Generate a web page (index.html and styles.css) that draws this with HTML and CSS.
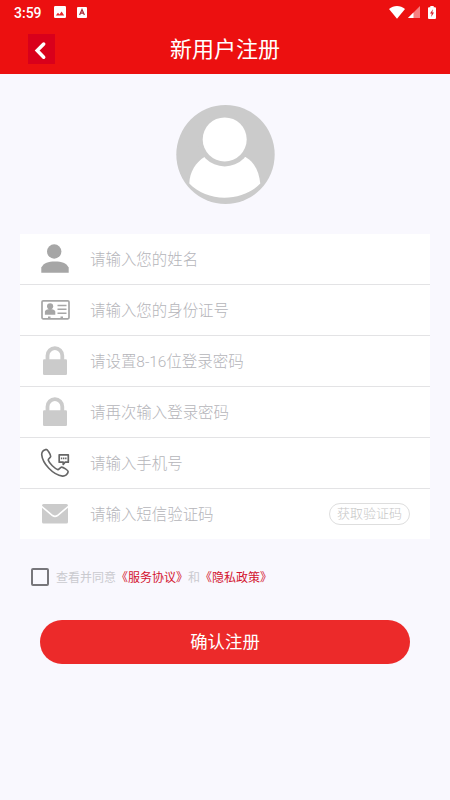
FILE: index.html
```html
<!DOCTYPE html>
<html lang="zh-CN">
<head>
<meta charset="utf-8">
<meta name="viewport" content="width=device-width, initial-scale=1">
<title>新用户注册</title>
<link rel="stylesheet" href="styles.css">
</head>
<body>
<header class="top">
  <div class="status">
    <span class="time">3:59</span>
    <svg class="st-img" width="12" height="12" viewBox="0 0 12 12"><rect width="12" height="12" rx="1.2" fill="#fff"/><path d="M1.8 9.6 4 6.8l1.5 1.7L7.6 5.6l2.6 4z" fill="#e8262a"/></svg>
    <svg class="st-a" width="10" height="11" viewBox="0 0 10 11"><rect width="10" height="11" rx="1" fill="#fff"/><path d="M2.6 8 5 2.6 7.4 8M3.4 6.2h3.2" fill="none" stroke="#a82a35" stroke-width="1.2"/></svg>
    <span class="spacer"></span>
    <svg class="st-wifi" width="16" height="13" viewBox="0 0 16 13"><path d="M0 3C4.600-.9 11.400-.9 16 3L8 12.700z" fill="#fff"/></svg>
    <svg class="st-cell" width="12" height="12" viewBox="0 0 12 12"><path d="M12 0v12H0z" fill="#f77f80"/><path d="M5.500 6.500V12H0z" fill="#fff"/></svg>
    <svg class="st-bat" width="8" height="13" viewBox="0 0 8 13"><path d="M2.300 0h3.400v1.200H7q1 0 1 1V12q0 1-1 1H1q-1 0-1-1V2.200q0-1 1-1h1.300z" fill="#fff"/><path d="M4.900 3.300 2 7.400h1.700L3.200 11 6 6.600H4.300z" fill="#d8202a"/></svg>
  </div>
  <div class="nav">
    <button class="back" aria-label="返回"><svg width="27" height="30" viewBox="0 0 27 30"><path d="M15.700 10 9.200 16.600l6.500 6.600" fill="none" stroke="#fff" stroke-width="3.500" stroke-linecap="round" stroke-linejoin="miter"/></svg></button>
    <h1>新用户注册</h1>
    <span></span>
  </div>
</header>
<main>
  <svg class="avatar" width="99" height="100" viewBox="0 0 99 100"><ellipse cx="49.500" cy="49.600" rx="49.200" ry="49.500" fill="#cbcbcb"/><path d="M28.500 52C20 57 13.500 67 13.300 78.500 22 87.500 35 92.700 48.500 92.700S76 87.500 84.300 78.500C83 67 78.500 57 69.500 52z" fill="#fff"/><circle cx="48.700" cy="34.400" r="27" fill="#cbcbcb"/><circle cx="48.700" cy="34.400" r="22" fill="#fff"/></svg>
  <form class="card">
    <label class="row"><svg class="icon" viewBox="0 0 30 30"><circle cx="14.200" cy="7.500" r="7.200" fill="#a6a6a6"/><path d="M1.300 28.800v-5.400C4 19 8 17.500 15 17.500s11 1.500 13.700 5.900v5.400z" fill="#a6a6a6"/></svg><span class="hint">请输入您的姓名</span></label>
    <label class="row"><svg class="icon" viewBox="0 0 30 30"><rect x="2" y="5.800" width="27" height="18" rx="1.200" fill="none" stroke="#a6a6a6" stroke-width="1.700"/><circle cx="10.100" cy="11.300" r="3.100" fill="#a6a6a6"/><path d="M4.900 19.700v-3.200q.7-2.600 5.200-2.600t5.200 2.600v3.200zM8 21.500h2.500v2H8zM20.500 21.500h2.500v2h-2.500z" fill="#a6a6a6"/><path d="M17.500 10.400h9M17.500 14.300h9M17.500 18.200h9" stroke="#a6a6a6" stroke-width="1.500"/></svg><span class="hint">请输入您的身份证号</span></label>
    <label class="row"><svg class="icon" viewBox="0 0 30 30"><path d="M7.500 14V9.700a7.400 7.500 0 0 1 14.800 0V14" fill="none" stroke="#cbcbcb" stroke-width="3.800"/><rect x="3" y="13.300" width="24" height="15.700" rx="1.200" fill="#cbcbcb"/></svg><span class="hint">请设置8-16位登录密码</span></label>
    <label class="row"><svg class="icon" viewBox="0 0 30 30"><path d="M7.500 14V9.700a7.400 7.500 0 0 1 14.800 0V14" fill="none" stroke="#cbcbcb" stroke-width="3.800"/><rect x="3" y="13.300" width="24" height="15.700" rx="1.200" fill="#cbcbcb"/></svg><span class="hint">请再次输入登录密码</span></label>
    <label class="row"><svg class="icon" viewBox="0 0 30 30" fill="none" stroke="#666" stroke-linejoin="round"><path d="M5.900 1.400C3.600 2 1.700 4 1.700 6.600 2.500 15.500 13 27 22.500 28.100c2.800.2 5.400-2.200 5.700-4.400.1-1.100-5.100-4.700-6.600-4.600-1.200.1-2.200 2-3.600 2.600C14.800 20.700 9.300 15.400 8.200 12c.2-1.500 2.400-2.200 2.500-3.600C10.700 6.900 7.700 1.200 5.900 1.400z" stroke-width="1.600"/><path d="M19.200 6.800h9.100v7.400h-3.300L23.200 16.400v-2.200h-4z" stroke-width="1.700"/><path d="M20.900 10.400h1.400m.7 0h1.400m.7 0h1.400" stroke-width="1.600"/></svg><span class="hint">请输入手机号</span></label>
    <label class="row"><svg class="icon" viewBox="0 0 30 30"><rect x="2" y="5" width="26" height="19.500" rx="1.600" fill="#cbcbcb"/><path d="M1.500 7.300 12.500 16.500q2.500 1.800 5 0L28.500 7.300" fill="none" stroke="#fff" stroke-width="1.600"/></svg><span class="hint">请输入短信验证码</span><button type="button" class="code">获取验证码</button></label>
  </form>
  <div class="agree"><span class="box"></span><p>查看并同意<a>《服务协议》</a>和<a>《隐私政策》</a></p></div>
  <button class="submit">确认注册</button>
</main>
</body>
</html>
```
FILE: styles.css
```css
* { box-sizing: border-box; }
body {
  margin: 0;
  min-height: 800px;
  background: #f9f8fe;
  font-family: Roboto, "Noto Sans CJK SC", sans-serif;
}
button { border: 0; padding: 0; font-family: inherit; }
svg { display: block; flex: none; }
.top { height: 74px; background: #ec1010; color: #fff; }
.status { display: flex; align-items: center; height: 25px; padding: 0 14px; }
.time { width: 40px; padding-top: 1px; font-size: 14px; font-weight: 500; line-height: 25px; }
.st-img, .st-a, .st-wifi, .st-cell, .st-bat { margin-bottom: 1px; }
.st-a { margin-left: 11px; }
.spacer { flex: 1; }
.st-cell { margin-left: 3px; }
.st-bat { margin-left: 8px; }
.nav {
  display: grid;
  grid-template-columns: 27px 1fr 27px;
  align-items: center;
  height: 48px;
  padding: 0 28px;
}
.back { height: 30px; background: #d9001b; }
h1 { margin: 0; padding-top: 2px; font-size: 22px; font-weight: 400; line-height: 30px; text-align: center; }
main { display: flex; flex-direction: column; padding: 31px 20px 0; }
.avatar { align-self: center; }
.card { margin-top: 29px; height: 305px; background: #fff; }
.row { display: flex; align-items: center; height: 51px; padding: 0 20px; border-bottom: 1px solid #e3e3e5; }
.row:last-child { height: 50px; border: 0; }
.icon { width: 30px; height: 30px; }
.hint { flex: 1; margin-left: 20px; padding-top: 2px; font-size: 15.450px; font-weight: 300; line-height: 24px; color: #b5b5ba; }
.code {
  width: 81px;
  height: 22px;
  border: 1px solid #dedede;
  border-radius: 11px;
  background: #fff;
  color: #c6c6c6;
  font-size: 13px;
  font-weight: 300;
  line-height: 20px;
}
.agree { display: flex; align-items: center; height: 20px; margin: 28px 0 0 11px; }
.box { width: 18px; height: 18px; border: 2px solid #77767b; border-radius: 2px; }
.agree p { margin: 0 0 0 7px; padding-top: 2px; font-size: 12px; line-height: 20px; color: #cacacf; }
.agree a { color: #d3142e; }
.submit {
  height: 44px;
  margin: 33px 20px 0;
  padding-top: 1px;
  border-radius: 22px;
  background: #ec2a2a;
  color: #fff;
  font-size: 17.400px;
  line-height: 43px;
}
```
